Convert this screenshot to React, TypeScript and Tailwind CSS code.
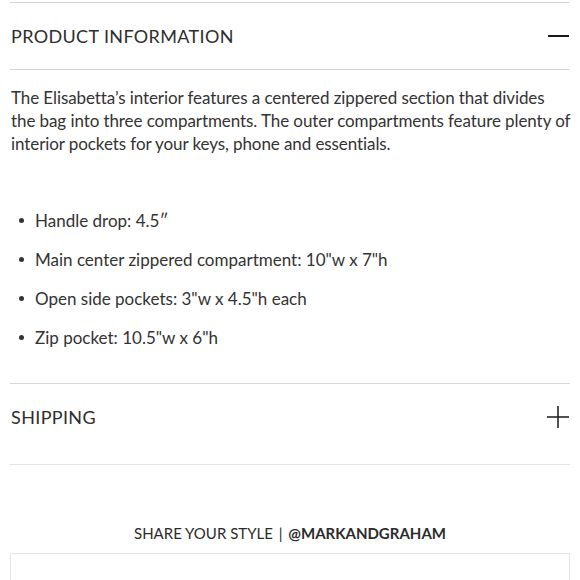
const BULLETS = [
  "Handle drop: 4.5\u2033",
  "Main center zippered compartment: 10\"w x 7\"h",
  "Open side pockets: 3\"w x 4.5\"h each",
  "Zip pocket: 10.5\"w x 6\"h",
]

const font = { fontFamily: "Lato, 'Open Sans', sans-serif" }

const App = () => {
  return (
    <div className="w-[580px] h-[580px] overflow-hidden bg-white text-[#2b2b2b]" style={font}>
      <div className="px-[10px] pt-[2px]">
        <div className="border-t border-[#d6d6d6]">
          <button className="w-full h-[66px] flex items-center justify-between pl-px pr-px">
            <span className="text-[18px] tracking-[0.02em] text-[#2e2e2e]">PRODUCT INFORMATION</span>
            <span className="block w-[21px] h-[2px] bg-[#1a1a1a]" />
          </button>
        </div>

        <div className="border-t border-[#d6d6d6] pt-[16px] pl-px">
          <p className="text-[17px] leading-[23px] tracking-[-0.005em] whitespace-nowrap text-[#333]">
            The Elisabetta’s interior features a centered zippered section that divides
            <br />
            the bag into three compartments. The outer compartments feature plenty of
            <br />
            interior pockets for your keys, phone and essentials.
          </p>

          <ul className="mt-[54px] flex flex-col gap-[16px] pb-[34px]">
            {BULLETS.map((item) => (
              <li key={item} className="flex items-center h-[23px] text-[17px] text-[#333]">
                <span className="w-[5px] h-[5px] rounded-full bg-[#333] ml-[8px] mr-[11px]" />
                {item}
              </li>
            ))}
          </ul>
        </div>

        <div className="border-t border-[#d6d6d6]">
          <button className="w-full h-[66px] flex items-center justify-between pl-px pr-px">
            <span className="text-[18px] tracking-[0.02em] text-[#2e2e2e]">SHIPPING</span>
            <svg width="22" height="22" viewBox="0 0 22 22" className="block">
              <path d="M11 0V22M0 11H22" stroke="#1a1a1a" strokeWidth="1.5" />
            </svg>
          </button>
          <div className="h-[14px]" />
        </div>

        <div className="border-t border-[#e4e4e4] pt-[57px] pb-[8px] text-center text-[15px] text-[#2b2b2b]">
          SHARE YOUR STYLE <span className="px-[2px]">|</span> <span className="font-bold">@MARKANDGRAHAM</span>
        </div>

        <div className="border border-[#e6e6e6] h-[60px]" />
      </div>
    </div>
  )
}

export default App
